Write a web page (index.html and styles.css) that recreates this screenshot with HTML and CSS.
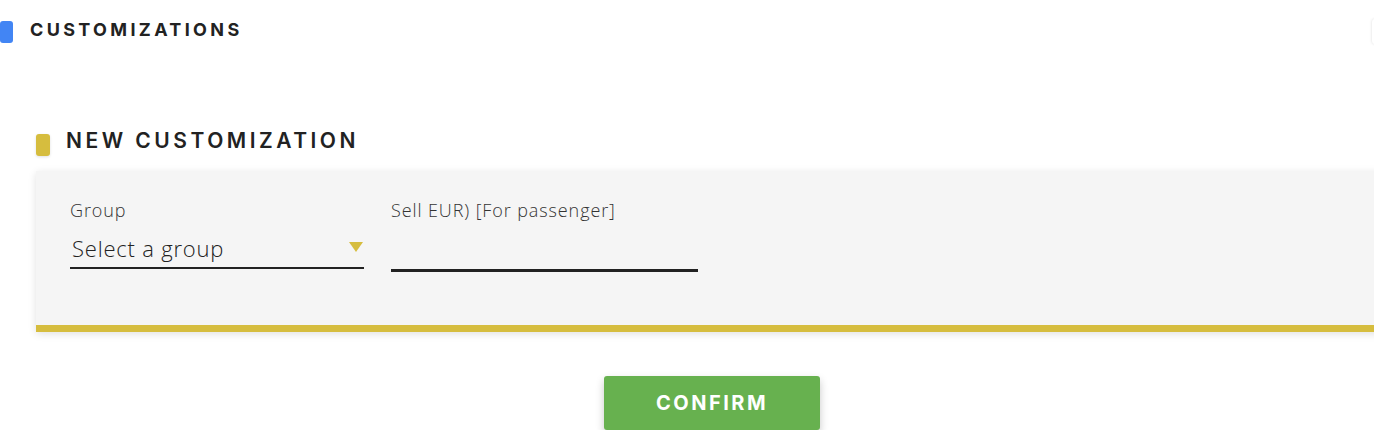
FILE: index.html
```html
<!DOCTYPE html>
<html lang="en">
<head>
    <meta charset="UTF-8">
    <meta name="viewport" content="width=device-width, initial-scale=1.0">
    <title>Customizations</title>
    <link rel="stylesheet" href="styles.css">
</head>
<body>
    <header class="page-header">
        <span class="marker marker-blue"></span>
        <h1>Customizations</h1>
        <span class="header-edge"></span>
    </header>

    <section class="section">
        <div class="section-title">
            <span class="marker marker-yellow"></span>
            <h2>New customization</h2>
        </div>

        <form class="panel" id="customizationForm">
            <div class="field-row">
                <div class="field field-group">
                    <label for="group">Group</label>
                    <div class="select-box">
                        <span class="select-value">Select a group</span>
                        <svg class="select-arrow" width="14" height="10" viewBox="0 0 14 10">
                            <polygon points="0,0 14,0 7,10" fill="#d6bd3e"/>
                        </svg>
                    </div>
                </div>
                <div class="field field-sell">
                    <label for="sell">Sell EUR) [For passenger]</label>
                    <input type="text" id="sell">
                </div>
            </div>
        </form>

        <div class="actions">
            <button type="submit" form="customizationForm" class="btn">Confirm</button>
        </div>
    </section>
</body>
</html>
```

FILE: styles.css
```css
:root {
    --text-color: #222222;
    --label-color: #333333;
    --blue: #4285f4;
    --yellow: #d6bd3e;
    --green: #67b14f;
    --panel-background: #f5f5f5;
}

* {
    margin: 0;
    padding: 0;
    box-sizing: border-box;
    font-family: Inter, "Open Sans", sans-serif;
}

body {
    background-color: #ffffff;
    color: var(--text-color);
    overflow: hidden;
}

.marker {
    display: block;
    border-radius: 3px;
    flex-shrink: 0;
}

.marker-blue {
    width: 13px;
    height: 22px;
    background-color: var(--blue);
}

.marker-yellow {
    width: 14px;
    height: 22px;
    background-color: var(--yellow);
    box-shadow: 0 1px 3px rgba(0, 0, 0, 0.12);
}

.page-header {
    display: flex;
    align-items: center;
    padding-top: 19px;
}

.page-header h1 {
    margin-left: 17px;
    margin-top: -3px;
    font-size: 18px;
    font-weight: 700;
    letter-spacing: 3.35px;
    text-transform: uppercase;
    line-height: 22px;
}

.header-edge {
    margin-left: auto;
    margin-right: -40px;
    width: 42px;
    height: 25px;
    border-radius: 3px;
    box-shadow: 0 0 3px rgba(0, 0, 0, 0.15);
}

.section {
    margin-left: 36px;
    width: 1352px;
    margin-top: 90px;
}

.section-title {
    display: flex;
    align-items: center;
    gap: 16px;
}

.section-title h2 {
    font-size: 21px;
    font-weight: 600;
    letter-spacing: 3.5px;
    text-transform: uppercase;
    line-height: 22px;
    margin-top: -8px;
}

.panel {
    margin-top: 15px;
    height: 161px;
    padding: 27px 34px 0;
    background-color: var(--panel-background);
    border-bottom: 7px solid var(--yellow);
    box-shadow: 0 2px 8px rgba(0, 0, 0, 0.12);
}

.field-row {
    display: flex;
    gap: 27px;
}

.field label {
    display: block;
    font-family: "Open Sans", sans-serif;
    font-size: 18px;
    font-weight: 300;
    line-height: 24px;
    letter-spacing: 0.9px;
    color: var(--label-color);
}

.field-group {
    width: 294px;
}

.field-sell {
    width: 307px;
}

.select-box {
    display: flex;
    align-items: center;
    justify-content: space-between;
    height: 47px;
    padding-top: 6px;
    border-bottom: 2.5px solid var(--text-color);
}

.select-value {
    padding-left: 2px;
    font-family: "Open Sans", sans-serif;
    font-size: 22px;
    font-weight: 300;
    letter-spacing: 0.8px;
    color: var(--text-color);
}

.select-arrow {
    margin-right: 1px;
    margin-top: -2px;
}

.field-sell input {
    display: block;
    width: 100%;
    height: 50px;
    background: transparent;
    border: none;
    border-bottom: 3px solid var(--text-color);
    font-size: 20px;
    outline: none;
}

.actions {
    display: flex;
    justify-content: center;
    margin-top: 44px;
}

.btn {
    width: 216px;
    height: 54px;
    background-color: var(--green);
    color: #ffffff;
    border: none;
    border-radius: 3px;
    font-size: 20px;
    font-weight: 700;
    letter-spacing: 2.5px;
    text-transform: uppercase;
    box-shadow: 0 4px 9px rgba(0, 0, 0, 0.22);
    cursor: pointer;
}
```
